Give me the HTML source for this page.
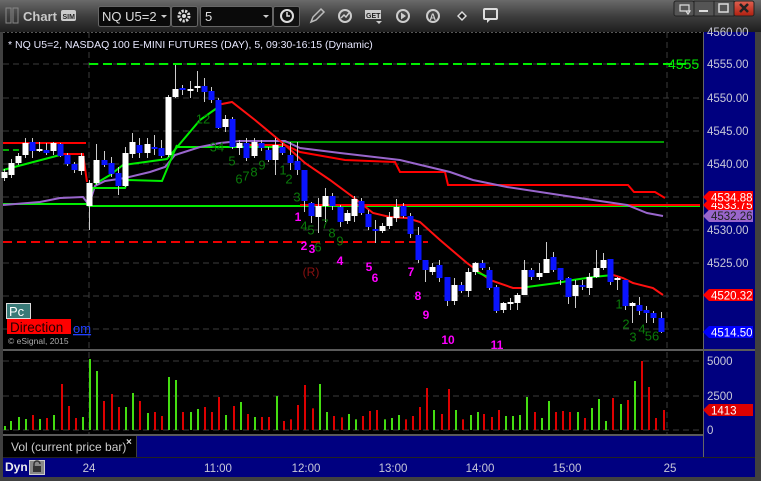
<!DOCTYPE html>
<html><head><meta charset="utf-8"><style>
*{margin:0;padding:0;box-sizing:border-box}
body{width:761px;height:481px;overflow:hidden;background:#3c3c3c;font-family:"Liberation Sans",sans-serif;position:relative}
.abs{position:absolute}
</style></head><body>
<svg class="abs" style="left:0;top:0" width="761" height="481" xmlns="http://www.w3.org/2000/svg" font-family="Liberation Sans, sans-serif">
<defs><linearGradient id="tb" x1="0" y1="0" x2="0" y2="1"><stop offset="0" stop-color="#6a6a6a"/><stop offset="0.5" stop-color="#3e3e3e"/><stop offset="1" stop-color="#1e1e1e"/></linearGradient>
<linearGradient id="xb" x1="0" y1="0" x2="0" y2="1"><stop offset="0" stop-color="#e06050"/><stop offset="1" stop-color="#b02010"/></linearGradient></defs>
<rect width="761" height="481" fill="#404040"/>
<rect x="0" y="0" width="761" height="32" fill="url(#tb)"/>
<!-- window buttons -->
<rect x="674" y="1" width="20" height="15" rx="2" fill="#555" stroke="#222"/>
<rect x="694" y="1" width="20" height="15" fill="#555" stroke="#222"/>
<rect x="714" y="1" width="20" height="15" fill="#555" stroke="#222"/>
<rect x="734" y="1" width="20" height="15" rx="2" fill="url(#xb)" stroke="#222"/>
<path d="M680 5h9v6h-9z M686 11l2 3 2-3z" fill="none" stroke="#ddd" stroke-width="1.2"/>
<rect x="699" y="10" width="9" height="2" fill="#ddd"/>
<rect x="719" y="4" width="9" height="8" fill="none" stroke="#ddd" stroke-width="1.5"/>
<path d="M740 4l8 8M748 4l-8 8" stroke="#222" stroke-width="2.5"/>
<!-- toolbar -->
<rect x="6" y="8" width="5" height="15" fill="none" stroke="#888"/>
<rect x="13" y="8" width="5" height="15" fill="none" stroke="#888"/>
<text x="23" y="21" fill="#c8c8c8" font-size="13" font-weight="bold">Chart</text>
<rect x="61" y="10" width="15" height="11" rx="2" fill="#ccc"/>
<text x="62.5" y="19" font-size="7" font-weight="bold" fill="#222">SIM</text>
<rect x="98.5" y="6.5" width="72" height="20" rx="2" fill="#0a0a0a" stroke="#666"/>
<text x="102" y="21" fill="#ddd" font-size="13">NQ U5=2</text>
<path d="M161 15l3 3 3-3z" fill="#ccc"/>
<rect x="171.5" y="6.5" width="26" height="20" rx="2" fill="#111" stroke="#666"/>
<circle cx="184" cy="16" r="5" fill="none" stroke="#ddd" stroke-width="3" stroke-dasharray="2.2 1.3"/>
<circle cx="184" cy="16" r="2" fill="#ddd"/>
<rect x="200.5" y="6.5" width="72" height="20" rx="2" fill="#0a0a0a" stroke="#666"/>
<text x="205" y="21" fill="#ddd" font-size="13">5</text>
<path d="M263 15l3 3 3-3z" fill="#ccc"/>
<rect x="273.5" y="6.5" width="26" height="20" rx="2" fill="#111" stroke="#666"/>
<circle cx="287" cy="16" r="6" fill="none" stroke="#ddd" stroke-width="2"/>
<path d="M287 12v4h3" stroke="#ddd" stroke-width="1.5" fill="none"/>
<path d="M311 22l2-5 8-8 3 3-8 8z" fill="none" stroke="#bbb" stroke-width="1.5"/>
<circle cx="345" cy="16" r="6" fill="none" stroke="#ccc" stroke-width="2"/>
<path d="M341 18l3-3 2 2 3-4" stroke="#ccc" fill="none" stroke-width="1.5"/>
<rect x="365" y="10" width="16" height="9" fill="#ccc"/>
<text x="366" y="18" font-size="7" font-weight="bold" fill="#222">GET</text>
<path d="M376 21l3 3 3-3z" fill="#ccc"/>
<circle cx="403" cy="16" r="6" fill="none" stroke="#ccc" stroke-width="2"/>
<path d="M401 12.5v7l5-3.5z" fill="#ccc"/>
<circle cx="433" cy="16" r="6" fill="none" stroke="#ccc" stroke-width="2"/>
<text x="429.5" y="20" font-size="9" font-weight="bold" fill="#ccc">A</text>
<path d="M457 16l5-5 5 5-5 5z" fill="#ddd"/>
<path d="M459 16l3-3 3 3-3 3z" fill="#222"/>
<rect x="484" y="9" width="13" height="10" rx="1" fill="none" stroke="#ddd" stroke-width="2"/>
<path d="M487 19l0 4 4-4" fill="#ddd"/>
<!-- chart bg -->
<rect x="3" y="32" width="700" height="318" fill="#000"/>
<line x1="3" y1="32.5" x2="703" y2="32.5" stroke="#555" stroke-dasharray="2 2"/>
<rect x="703" y="32" width="52" height="434" fill="#00007f"/>
<line x1="703.5" y1="32" x2="703.5" y2="458" stroke="#666"/>
<rect x="3" y="351" width="700" height="84" fill="#000"/>
<rect x="3" y="349" width="752" height="2" fill="#5a5a5a"/>
<rect x="3" y="434" width="700" height="2" fill="#5a5a5a"/>
<rect x="3" y="436" width="133" height="21" fill="#000"/>
<rect x="137" y="436" width="566" height="21" fill="#000080"/>
<rect x="3" y="457" width="752" height="20" fill="#000080"/>
<rect x="3" y="457" width="752" height="1" fill="#222"/>
<!-- grid -->
<g stroke="#3c3c3c" stroke-dasharray="6 4">
<line x1="3" y1="64" x2="703" y2="64"/><line x1="3" y1="98" x2="703" y2="98"/><line x1="3" y1="131" x2="703" y2="131"/><line x1="3" y1="164" x2="703" y2="164"/><line x1="3" y1="197" x2="703" y2="197"/><line x1="3" y1="230" x2="703" y2="230"/><line x1="3" y1="263" x2="703" y2="263"/><line x1="3" y1="296" x2="703" y2="296"/><line x1="3" y1="329" x2="703" y2="329"/>
<line x1="3" y1="361" x2="703" y2="361"/><line x1="3" y1="396" x2="703" y2="396"/><line x1="3" y1="430" x2="703" y2="430"/>
<line x1="89" y1="32" x2="89" y2="434"/><line x1="667" y1="32" x2="667" y2="434"/>
</g>
<!-- levels -->
<line x1="89" y1="64" x2="690" y2="64" stroke="#00ee00" stroke-width="2" stroke-dasharray="9 5"/>
<text x="668" y="69" fill="#00ee00" font-size="14">4555</text>
<line x1="3" y1="242" x2="428" y2="242" stroke="#ee0000" stroke-width="2" stroke-dasharray="9 5"/>
<line x1="3" y1="143" x2="86" y2="143" stroke="#ff0000" stroke-width="2"/>
<line x1="3" y1="150" x2="25" y2="150" stroke="#00aa00" stroke-width="2" stroke-dasharray="6 4"/>
<polyline points="3,204 86,204 89,206 700,206" fill="none" stroke="#00ee00" stroke-width="2"/>
<line x1="300" y1="205" x2="700" y2="205" stroke="#ff0000" stroke-width="2"/>
<polyline points="177,147 283,147" fill="none" stroke="#00ee00" stroke-width="2"/>
<line x1="283" y1="142" x2="664" y2="142" stroke="#009900" stroke-width="2"/>
<polyline points="245,145 285,145 300,152 345,160 395,162 400,172 445,172 448,185 628,185 634,192 655,192 665,198" fill="none" stroke="#ff0000" stroke-width="2"/>
<polyline points="3,205 40,202 60,198 83,197 89,205 95,186 105,181 125,178 150,172 165,167 175,155 200,147 220,143 240,141 285,141 300,148 340,153 400,160 450,172 473,180 507,187 573,197 627,205 647,213 663,216" fill="none" stroke="#9966cc" stroke-width="2"/>
<polyline points="3,170 60,155" fill="none" stroke="#00ee00" stroke-width="2"/>
<polyline points="63,154 83,154 87,182" fill="none" stroke="#ff0000" stroke-width="2"/>
<polyline points="88,202 93,188 125,188 128,180 162,181 177,145" fill="none" stroke="#00ee00" stroke-width="2"/>
<polyline points="95,184 110,175 123,165 167,159 200,120 217,108" fill="none" stroke="#00ee00" stroke-width="2"/>
<polyline points="217,105 232,102 255,120 285,145 305,163 330,180 353,197 373,213 390,217 407,218 420,222 440,240 467,263 490,280 513,288 527,288" fill="none" stroke="#ff1010" stroke-width="2"/>
<polyline points="477,272 490,278" fill="none" stroke="#00ee00" stroke-width="2"/>
<polyline points="527,287 557,283 573,280 593,277 613,275" fill="none" stroke="#00ee00" stroke-width="2"/>
<polyline points="613,275 623,278 633,283 653,288 663,295" fill="none" stroke="#ff1010" stroke-width="2"/>
<g id="candles"></g>
<g id="vol"></g>
<!-- counts -->
<g fill="#0a7a0a" font-size="13" text-anchor="middle" dominant-baseline="middle">
<text x="203" y="120">12</text><text x="217" y="148">34</text><text x="232" y="162">5</text><text x="239" y="180">6</text><text x="246" y="177">7</text><text x="254" y="173">8</text><text x="262" y="166">9</text><text x="283" y="171">1</text><text x="289" y="180">2</text><text x="297" y="198">3</text><text x="304" y="227">4</text><text x="311" y="231">5</text><text x="325" y="225">7</text><text x="332" y="234">8</text><text x="340" y="242">9</text><text x="318" y="248">6</text>
<text x="619" y="305">1</text><text x="626" y="325">2</text><text x="633" y="338">3</text><text x="642" y="330">4</text><text x="652" y="337">56</text>
</g>
<g fill="#ff00ff" font-size="12" font-weight="bold" text-anchor="middle" dominant-baseline="middle">
<text x="298" y="218">1</text><text x="304" y="247">2</text><text x="312" y="250">3</text><text x="340" y="262">4</text><text x="369" y="268">5</text><text x="375" y="279">6</text><text x="411" y="273">7</text><text x="418" y="297">8</text><text x="426" y="316">9</text><text x="448" y="341">10</text><text x="497" y="346">11</text>
</g>
<text x="311" y="276" fill="#8a1010" font-size="12" text-anchor="middle">(R)</text>
<text x="8" y="48" fill="#e8e8ff" font-size="10.5">* NQ U5=2, NASDAQ 100 E-MINI FUTURES (DAY), 5, 09:30-16:15 (Dynamic)</text>
<rect x="6.5" y="303.5" width="24" height="15" fill="#3a7a78" stroke="#ddd"/>
<text x="9" y="316" fill="#fff" font-size="13">Pc</text>
<rect x="7" y="319" width="64" height="15" fill="#ff0000"/>
<text x="10" y="332" fill="#220000" font-size="13.5">Direction</text>
<text x="73" y="333" fill="#2040ff" font-size="13" text-decoration="underline">om</text>
<text x="8" y="344" fill="#aaa" font-size="8.5">© eSignal, 2015</text>
<!-- axis -->
<g fill="#c8c8d8" font-size="11.5">
<text x="707" y="36">4560.00</text><text x="707" y="68">4555.00</text><text x="707" y="102">4550.00</text><text x="707" y="135">4545.00</text><text x="707" y="168">4540.00</text><text x="707" y="234">4530.00</text><text x="707" y="267">4525.00</text><text x="707" y="300">4520.00</text>
<text x="707" y="365">5000</text><text x="707" y="400">2500</text><text x="707" y="434">0</text>
</g>
<path d="M703,205 L709,199 H753 V211 H709 Z" fill="#ff0000"/><text x="711" y="209" fill="#fff" font-size="11.5">4533.75</text>
<path d="M703,216 L709,210 H753 V222 H709 Z" fill="#9966cc"/><text x="711" y="220" fill="#222" font-size="11.5">4532.26</text>
<path d="M703,197 L709,191 H753 V203 H709 Z" fill="#ff0000"/><text x="711" y="201.5" fill="#fff" font-size="11.5">4534.88</text>
<path d="M703,295 L709,289 H753 V301 H709 Z" fill="#ff0000"/><text x="711" y="299.5" fill="#fff" font-size="11.5">4520.32</text>
<path d="M703,332 L709,326 H753 V338 H709 Z" fill="#0000ff"/><text x="711" y="336.5" fill="#fff" font-size="11.5">4514.50</text>
<path d="M703,410 L709,404 H753 V416 H709 Z" fill="#dd0000"/><text x="711" y="414.5" fill="#fff" font-size="11.5">1413</text>
<!-- vol label -->
<text x="11" y="451" fill="#ccc" font-size="12">Vol (current price bar)</text>
<text x="126" y="445" fill="#ddd" font-size="10" font-weight="bold">×</text>
<!-- bottom axis -->
<text x="5" y="471" fill="#eee" font-size="12" font-weight="bold">Dyn</text>
<rect x="29.5" y="460.5" width="15" height="14" fill="#888" stroke="#ccc"/>
<path d="M34 466v-2a3 3 0 0 1 6 0" stroke="#333" fill="none" stroke-width="1.5"/><rect x="33" y="466" width="8" height="6" fill="#333"/>
<g fill="#c8c8d8" font-size="11.5" text-anchor="middle">
<text x="89" y="472">24</text><text x="218" y="472">11:00</text><text x="306" y="472">12:00</text><text x="393" y="472">13:00</text><text x="480" y="472">14:00</text><text x="567" y="472">15:00</text><text x="670" y="472">25</text>
</g>
</svg>
<script>
var C=[[4,172,178,169,181,'w'],[11,163,175,159,178,'w'],[18,156,163,153,165,'w'],[25,143,155,138,158,'w'],[32,142,151,138,158,'b'],[39,149,151,142,152,'w'],[46,150,153,143,155,'b'],[53,143,151,142,155,'w'],[60,144,156,143,157,'b'],[67,155,164,153,166,'b'],[74,164,170,162,173,'b'],[81,156,171,153,175,'w'],
[89,183,206,180,230,'w'],[96,160,183,144,185,'w'],[104,160,165,151,167,'b'],[111,163,174,157,177,'b'],[118,173,186,167,195,'b'],[125,153,186,147,187,'w'],[132,142,154,133,158,'w'],[139,145,153,138,158,'b'],[147,144,153,138,158,'w'],[154,147,149,135,155,'b'],[161,148,156,140,158,'b'],[168,97,155,95,157,'w'],[175,89,97,65,98,'w'],[182,88,90,85,95,'b'],[190,89,91,81,98,'w'],[197,86,88,71,92,'w'],[204,86,92,78,102,'b'],[211,91,100,87,103,'b'],[218,100,128,98,129,'b'],[225,119,127,115,132,'w'],[232,119,147,117,149,'b'],[239,143,148,140,155,'w'],[246,143,158,138,161,'b'],[254,142,156,138,158,'w'],[261,143,148,140,151,'b'],[268,150,160,147,162,'b'],[275,145,160,138,175,'w'],[282,147,153,143,155,'b'],[290,155,163,142,170,'b'],[297,161,170,142,175,'b'],[304,170,201,170,212,'b'],[311,203,216,202,223,'b'],[318,206,217,198,233,'w'],[325,196,206,188,222,'w'],[332,196,206,193,210,'b'],[340,207,222,205,227,'b'],[347,213,221,210,224,'w'],[354,199,216,196,222,'w'],[361,201,213,198,215,'b'],[368,214,227,210,230,'b'],[375,229,231,220,243,'b'],[382,226,231,223,233,'w'],[389,217,226,212,229,'w'],[396,207,218,199,222,'w'],[403,206,216,203,218,'b'],[410,216,234,213,238,'b'],[418,235,260,227,263,'b'],[425,260,270,260,282,'b'],[432,267,272,263,275,'w'],[439,265,278,260,282,'b'],[447,277,301,277,306,'b'],[454,285,301,278,305,'w'],[461,285,291,282,293,'b'],[468,272,291,268,297,'w'],[475,263,272,262,275,'w'],[482,263,268,260,270,'b'],[489,270,288,267,290,'b'],[496,287,311,285,313,'b'],[503,303,310,302,313,'w'],[510,302,304,298,310,'w'],[517,295,303,293,310,'w'],[524,270,295,260,295,'w'],[531,270,277,268,280,'b'],[539,273,277,263,280,'w'],[546,259,273,242,273,'w'],[553,257,270,252,272,'b'],[560,268,280,268,285,'b'],[568,278,297,277,304,'b'],[575,285,296,280,308,'w'],[582,285,287,280,290,'b'],[589,277,288,273,295,'w'],[596,268,277,250,278,'w'],[603,260,268,253,270,'w'],[610,259,282,259,285,'b'],[617,278,280,277,290,'w'],[625,280,306,280,310,'b'],[632,303,306,302,323,'w'],[639,305,311,297,315,'b'],[646,310,313,306,323,'b'],[653,313,318,311,323,'b'],[661,318,332,312,333,'b']];
var s='';C.forEach(function(c){var x=c[0];s+='<line x1="'+(x+0.5)+'" y1="'+c[3]+'" x2="'+(x+0.5)+'" y2="'+c[4]+'" stroke="#ccc" stroke-width="1"/>';s+='<rect x="'+(x-2.5)+'" y="'+c[1]+'" width="6" height="'+Math.max(2,c[2]-c[1])+'" fill="'+(c[5]=='w'?'#fff':'#0a14ff')+'"/>';});
document.getElementById('candles').innerHTML=s;
var V=[[4,426,'g'],[10,421,'g'],[18,417,'g'],[25,419,'g'],[32,415,'r'],[39,419,'g'],[46,418,'r'],[53,415,'g'],[61,384,'r'],[68,406,'r'],[75,418,'r'],[82,417,'g'],[89,359,'g'],[96,371,'g'],[103,401,'r'],[111,394,'r'],[118,407,'r'],[125,407,'g'],[132,393,'g'],[139,401,'r'],[147,413,'g'],[154,412,'r'],[161,416,'r'],[168,377,'g'],[175,380,'g'],[182,412,'r'],[190,412,'g'],[197,409,'g'],[204,407,'r'],[211,412,'r'],[218,397,'r'],[225,415,'g'],[233,406,'r'],[240,402,'g'],[247,414,'r'],[254,417,'g'],[261,417,'r'],[268,417,'r'],[276,396,'g'],[283,421,'r']];
var Z=[[0,208,'r'],[22,165,'r'],[43,105,'r'],[65,175,'r'],[88,102,'g'],[109,186,'g'],[130,198,'r'],[152,202,'r'],[173,192,'g'],[194,208,'g'],[217,198,'r'],[238,183,'r'],[259,180,'r'],[281,208,'g'],[302,204,'g'],[323,195,'g'],[346,208,'r'],[367,198,'r'],[388,171,'r'],[409,114,'r'],[430,180,'g'],[452,192,'r'],[475,117,'r'],[496,180,'g'],[517,208,'r'],[539,195,'g'],[560,186,'g'],[580,192,'r'],[603,201,'r'],[625,180,'r'],[646,198,'g'],[667,198,'g'],[688,195,'g'],[709,141,'g'],[733,186,'r'],[754,204,'g'],[775,153,'g'],[796,186,'r'],[817,183,'r'],[838,186,'r'],[861,186,'g'],[883,204,'r'],[904,174,'g'],[925,147,'g'],[946,213,'g'],[967,144,'r'],[991,162,'g'],[1012,150,'r'],[1033,93,'g'],[1054,33,'r'],[1075,111,'r'],[1096,204,'r'],[1120,180,'r']];
Z.forEach(function(z){V.push([290+z[0]/3,350+z[1]/3,z[2]]);});
var t='';V.forEach(function(v){t+='<rect x="'+Math.round(v[0])+'" y="'+v[1]+'" width="2" height="'+(430-v[1])+'" fill="'+(v[2]=='g'?'#44dd11':'#dd0000')+'"/>';});
document.getElementById('vol').innerHTML=t;
</script>
</body></html>
